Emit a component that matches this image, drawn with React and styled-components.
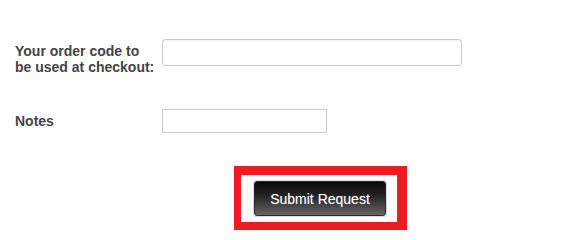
import React from 'react'
import styled, { createGlobalStyle } from 'styled-components'

const GlobalStyle = createGlobalStyle`
  html, body {
    margin: 0;
    padding: 0;
    background: #fff;
  }
  body {
    font-family: "Liberation Sans", Arial, sans-serif;
  }
`

const Form = styled.form`
  padding: 39px 0 0 15px;
  width: 578px;
  height: 230px;
  box-sizing: border-box;
  overflow: hidden;
`

const Row = styled.div`
  display: grid;
  grid-template-columns: 147px auto;
  align-items: start;
  margin-bottom: ${(props) => props.gap}px;
`

const Label = styled.label`
  margin-top: 4px;
  font-size: 14px;
  line-height: 16px;
  font-weight: bold;
  color: #444;
`

const TextInput = styled.input`
  box-sizing: border-box;
  width: ${(props) => props.w}px;
  height: ${(props) => props.h}px;
  margin: 0;
  padding: 0 6px;
  border: 1px solid #cbcbcb;
  border-radius: ${(props) => (props.rounded ? '3px' : '0')};
  background: #fff;
  box-shadow: ${(props) => (props.rounded ? 'inset 0 1px 3px rgba(0,0,0,0.06)' : 'none')};
  font-family: inherit;
  font-size: 13px;
  outline: none;
`

const Actions = styled.div`
  display: flex;
  padding-left: 219px;
`

const Highlight = styled.div`
  border-style: solid;
  border-color: #ed1c24;
  border-width: 9px 10px 8px 7px;
  padding: 6px 11px 6px 13px;
  background: #fff;
`

const SubmitButton = styled.button`
  display: block;
  width: 132px;
  height: 35px;
  margin: 0;
  padding: 0;
  border: 1px solid #2a2a2a;
  border-radius: 3px;
  background: linear-gradient(to bottom, #080808 0%, #222 40%, #666 100%);
  box-shadow: 0 0 0 1px rgba(0,0,0,0.15);
  color: #fff;
  font-family: "Liberation Sans", Arial, sans-serif;
  font-size: 14px;
  text-shadow: 0 0 1px rgba(255,255,255,0.3);
  cursor: pointer;
`

export default function App() {
  return (
    <>
      <GlobalStyle />
      <Form onSubmit={(e) => e.preventDefault()}>
        <Row gap={34}>
          <Label htmlFor="order-code">
            Your order code to
            <br />
            be used at checkout:
          </Label>
          <TextInput id="order-code" type="text" w={300} h={27} rounded />
        </Row>
        <Row gap={33}>
          <Label htmlFor="notes">Notes</Label>
          <TextInput id="notes" type="text" w={165} h={24} />
        </Row>
        <Actions>
          <Highlight>
            <SubmitButton type="submit">Submit Request</SubmitButton>
          </Highlight>
        </Actions>
      </Form>
    </>
  )
}
